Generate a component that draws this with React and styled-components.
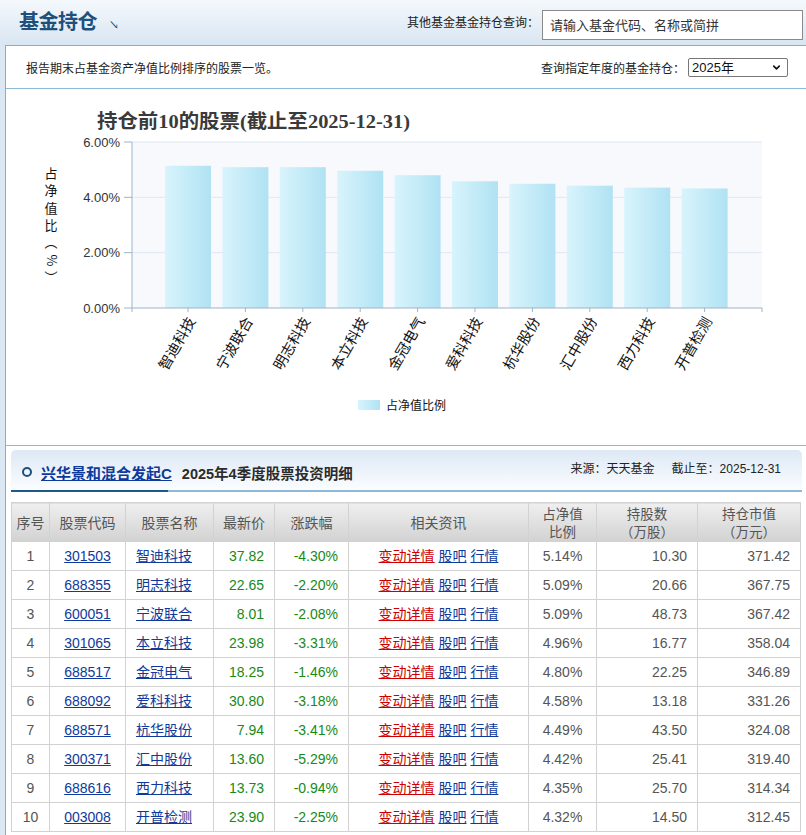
import React from "react";
import styled, { createGlobalStyle } from "styled-components";
import { ChevronDown } from "lucide-react";

const GlobalStyle = createGlobalStyle`
  html, body {
    margin: 0;
    padding: 0;
  }
  body {
    background: #dbe7f3;
    font-family: "Liberation Sans", Arial, "Noto Sans CJK SC", sans-serif;
    color: #333;
    overflow: hidden;
  }
`;

const chartData = [
  { name: "智迪科技", value: 5.14 },
  { name: "宁波联合", value: 5.09 },
  { name: "明志科技", value: 5.09 },
  { name: "本立科技", value: 4.96 },
  { name: "金冠电气", value: 4.8 },
  { name: "爱科科技", value: 4.58 },
  { name: "杭华股份", value: 4.49 },
  { name: "汇中股份", value: 4.42 },
  { name: "西力科技", value: 4.35 },
  { name: "开普检测", value: 4.32 },
];

const rows = [
  ["1", "301503", "智迪科技", "37.82", "-4.30%", "5.14%", "10.30", "371.42"],
  ["2", "688355", "明志科技", "22.65", "-2.20%", "5.09%", "20.66", "367.75"],
  ["3", "600051", "宁波联合", "8.01", "-2.08%", "5.09%", "48.73", "367.42"],
  ["4", "301065", "本立科技", "23.98", "-3.31%", "4.96%", "16.77", "358.04"],
  ["5", "688517", "金冠电气", "18.25", "-1.46%", "4.80%", "22.25", "346.89"],
  ["6", "688092", "爱科科技", "30.80", "-3.18%", "4.58%", "13.18", "331.26"],
  ["7", "688571", "杭华股份", "7.94", "-3.41%", "4.49%", "43.50", "324.08"],
  ["8", "300371", "汇中股份", "13.60", "-5.29%", "4.42%", "25.41", "319.40"],
  ["9", "688616", "西力科技", "13.73", "-0.94%", "4.35%", "25.70", "314.34"],
  ["10", "003008", "开普检测", "23.90", "-2.25%", "4.32%", "14.50", "312.45"],
];

const colWidths = [38, 76, 88, 61, 74, 180, 68, 101, 103];

function HoldingChart() {
  const X0 = 132;
  const X1 = 762;
  const Y0 = 142;
  const Y1 = 308;
  const yOf = (v) => Y1 - (v / 6) * (Y1 - Y0);
  const cx = (i) => 188 + 57.4 * i;
  const yTicks = [0, 2, 4, 6];
  const yTitle = ["占", "净", "值", "比", "︵", "%", "︶"];

  return (
    <svg width="801" height="356" style={{ display: "block" }}>
      <defs>
        <linearGradient id="barFill" x1="0" y1="0" x2="1" y2="0">
          <stop offset="0" stopColor="#d8f4fc" />
          <stop offset="1" stopColor="#b0e2f3" />
        </linearGradient>
      </defs>
      <g transform="translate(-6,-89)">
        <text
          x="97"
          y="128"
          fontSize="19"
          fontWeight="bold"
          fill="#3a3a3a"
          fontFamily='"Liberation Serif", "Noto Sans CJK SC", serif'
          textLength="313"
          lengthAdjust="spacingAndGlyphs"
        >
          持仓前10的股票(截止至2025-12-31)
        </text>

        {yTitle.map((ch, i) => (
          <text
            key={i}
            x="51"
            y={178 + i * 17.3}
            fontSize="13"
            textAnchor="middle"
            fill="#111"
            fontFamily='"Noto Sans CJK SC", sans-serif'
            transform={ch === "%" ? `rotate(90 51 ${174 + i * 17.3})` : undefined}
          >
            {ch}
          </text>
        ))}

        <rect x={X0} y={Y0} width={X1 - X0} height={Y1 - Y0} fill="#f7f9fc" />
        {yTicks.map((t) => (
          <g key={t}>
            {t > 0 && (
              <line x1={X0} x2={X1} y1={yOf(t)} y2={yOf(t)} stroke="#e0e8f1" strokeWidth="1" />
            )}
            <line x1={X0 - 8} x2={X0} y1={yOf(t)} y2={yOf(t)} stroke="#9db4c9" />
            <text
              x="120"
              y={yOf(t) + 4.5}
              fontSize="13"
              textAnchor="end"
              fill="#333"
              fontFamily='"Liberation Sans", Arial, sans-serif'
            >
              {t.toFixed(2)}%
            </text>
          </g>
        ))}

        {chartData.map((d, i) => (
          <rect
            key={d.name}
            x={cx(i) - 23}
            y={yOf(d.value)}
            width="46"
            height={Y1 - yOf(d.value)}
            fill="url(#barFill)"
          />
        ))}

        <line x1={X0} x2={X0} y1={Y0} y2={Y1} stroke="#9db4c9" />
        <line x1={X0} x2={X1} y1={Y1} y2={Y1} stroke="#9db4c9" />
        <line x1={X0} x2={X0} y1={Y1} y2={Y1 + 4} stroke="#9db4c9" />
        <line x1={X1} x2={X1} y1={Y1} y2={Y1 + 4} stroke="#9db4c9" />
        {chartData.map((d, i) => (
          <g key={d.name}>
            <line x1={cx(i)} x2={cx(i)} y1={Y1} y2={Y1 + 4} stroke="#9db4c9" />
            <text
              x={cx(i) + 8}
              y="321"
              fontSize="14.5"
              textAnchor="end"
              fill="#111"
              fontFamily='"Noto Sans CJK SC", sans-serif'
              transform={`rotate(-60 ${cx(i) + 8} 321)`}
            >
              {d.name}
            </text>
          </g>
        ))}

        <rect x="358" y="400" width="22" height="10" fill="url(#barFill)" />
        <text
          x="386"
          y="410"
          fontSize="12"
          fill="#111"
          fontFamily='"Noto Sans CJK SC", sans-serif'
        >
          占净值比例
        </text>
      </g>
    </svg>
  );
}

export default function App() {
  return (
    <Page>
      <GlobalStyle />
      <TopBar>
        <Title>
          基金持仓<Corner>↘</Corner>
        </Title>
        <Search>
          <Label>其他基金基金持仓查询：</Label>
          <SearchInput placeholder="请输入基金代码、名称或简拼" />
        </Search>
      </TopBar>

      <Panel>
        <IntroRow>
          <Small>报告期末占基金资产净值比例排序的股票一览。</Small>
          <Search>
            <Small>查询指定年度的基金持仓：</Small>
            <SelectWrap>
              <Select defaultValue="2025">
                <option value="2025">2025年</option>
                <option value="2024">2024年</option>
              </Select>
              <ChevronDown size={11} strokeWidth={3.5} />
            </SelectWrap>
          </Search>
        </IntroRow>

        <ChartBox>
          <HoldingChart />
        </ChartBox>

        <Section>
          <SectionHead>
            <HeadLeft>
              <Ring />
              <FundLink href="#">兴华景和混合发起C</FundLink>
              <HeadTitle>2025年4季度股票投资明细</HeadTitle>
            </HeadLeft>
            <HeadRight>
              <span>来源：天天基金</span>
              <span>截止至：2025-12-31</span>
            </HeadRight>
          </SectionHead>
          <Rule />

          <Table>
            <colgroup>
              {colWidths.map((w, i) => (
                <col key={i} style={{ width: w }} />
              ))}
            </colgroup>
            <thead>
              <tr>
                <Th>序号</Th>
                <Th>股票代码</Th>
                <Th>股票名称</Th>
                <Th>最新价</Th>
                <Th>涨跌幅</Th>
                <Th>相关资讯</Th>
                <Th>
                  <ThLine>占净值</ThLine>
                  <ThLine>比例</ThLine>
                </Th>
                <Th>
                  <ThLine>持股数</ThLine>
                  <ThLine>（万股）</ThLine>
                </Th>
                <Th>
                  <ThLine>持仓市值</ThLine>
                  <ThLine>（万元）</ThLine>
                </Th>
              </tr>
            </thead>
            <tbody>
              {rows.map((r) => (
                <tr key={r[0]}>
                  <Td $align="center">{r[0]}</Td>
                  <Td $align="center">
                    <Link href="#">{r[1]}</Link>
                  </Td>
                  <Td $align="left">
                    <Link href="#">{r[2]}</Link>
                  </Td>
                  <Td $align="right" $tone="up">
                    {r[3]}
                  </Td>
                  <Td $align="right" $tone="up">
                    {r[4]}
                  </Td>
                  <Td $align="center">
                    <Link href="#" $red>
                      变动详情
                    </Link>{" "}
                    <Link href="#">股吧</Link> <Link href="#">行情</Link>
                  </Td>
                  <Td $align="center">{r[5]}</Td>
                  <Td $align="right">{r[6]}</Td>
                  <Td $align="right">{r[7]}</Td>
                </tr>
              ))}
            </tbody>
          </Table>
        </Section>
      </Panel>
    </Page>
  );
}

const Page = styled.div`
  width: 806px;
  height: 835px;
  overflow: hidden;
`;

const TopBar = styled.div`
  height: 45px;
  display: flex;
  align-items: center;
  justify-content: space-between;
  padding: 0 3px 0 19px;
  background: linear-gradient(#f4f8fc, #d9e6f2);
`;

const Title = styled.h1`
  margin: 0;
  font-size: 20px;
  line-height: 24px;
  font-weight: bold;
  color: #1f4f7b;
  font-family: "Noto Sans CJK SC", sans-serif;
  letter-spacing: -0.5px;
`;

const Corner = styled.span`
  margin-left: 12px;
  font-size: 10px;
  color: #1f4f7b;
  font-weight: normal;
`;

const Search = styled.div`
  display: flex;
  align-items: center;
`;

const Label = styled.span`
  font-size: 12px;
  color: #222;
  margin-right: 3px;
  margin-top: -2px;
`;

const SearchInput = styled.input`
  box-sizing: border-box;
  width: 261px;
  height: 30px;
  margin-top: 4px;
  border: 1px solid #8a8a8a;
  padding: 0 7px;
  font-size: 13px;
  font-family: "Noto Sans CJK SC", sans-serif;
  background: #fff;
  outline: none;
  &::placeholder {
    color: #333;
  }
`;

const Panel = styled.div`
  margin-left: 5px;
  width: 801px;
  border: 1px solid #7fb1cf;
  background: #fff;
  padding-bottom: 20px;
`;

const IntroRow = styled.div`
  height: 42px;
  display: flex;
  align-items: center;
  justify-content: space-between;
  padding: 0 19px 0 20px;
  border-bottom: 1px solid #8dbad7;
`;

const Small = styled.span`
  font-size: 12px;
  color: #222;
`;

const SelectWrap = styled.div`
  position: relative;
  margin-left: 3px;
  svg {
    position: absolute;
    right: 6px;
    top: 4px;
    pointer-events: none;
    color: #111;
  }
`;

const Select = styled.select`
  appearance: none;
  box-sizing: border-box;
  width: 100px;
  height: 19px;
  padding: 0 0 0 3px;
  border: 1px solid #777;
  border-radius: 2px;
  background: #fff;
  font-size: 13px;
  font-family: "Liberation Sans", "Noto Sans CJK SC", sans-serif;
  color: #111;
  line-height: 17px;
`;

const ChartBox = styled.div`
  height: 356px;
  border-bottom: 1px solid #8dbad7;
`;

const Section = styled.div`
  margin: 4px 0 0 5px;
  width: 791px;
`;

const SectionHead = styled.div`
  height: 40px;
  display: flex;
  align-items: center;
  justify-content: space-between;
  padding: 0 21px 0 11px;
  border-radius: 5px 5px 0 0;
  background: linear-gradient(#dde8f5, #fbfdff);
`;

const HeadLeft = styled.div`
  display: flex;
  align-items: center;
  margin-top: 4px;
`;

const Ring = styled.span`
  box-sizing: border-box;
  width: 10px;
  height: 10px;
  border: 2px solid #1f4f7b;
  border-radius: 50%;
  margin-right: 9px;
`;

const FundLink = styled.a`
  font-size: 15px;
  font-weight: bold;
  color: #0f3a9b;
  text-decoration: underline;
  margin-right: 10px;
  font-family: "Liberation Sans", "Noto Sans CJK SC", sans-serif;
`;

const HeadTitle = styled.span`
  font-size: 14.5px;
  font-weight: bold;
  color: #2b2b2b;
`;

const HeadRight = styled.div`
  display: flex;
  gap: 17px;
  font-size: 12px;
  color: #222;
  margin-top: -6px;
`;

const Rule = styled.div`
  height: 2px;
  background: linear-gradient(to right, #1d5a8a 157px, #8fb8d8 157px);
`;

const Table = styled.table`
  margin-top: 10px;
  width: 789px;
  border-collapse: collapse;
  table-layout: fixed;
  font-size: 14px;
`;

const Th = styled.th`
  height: 38px;
  padding: 0;
  border: 1px solid #d2d2d2;
  background: linear-gradient(#efefef, #d2d2d2);
  color: #555;
  font-weight: normal;
  font-size: 14px;
  line-height: 18px;
  font-family: "Noto Sans CJK SC", sans-serif;
`;

const ThLine = styled.div`
  font-size: 13.5px;
  height: 18px;
  line-height: 18px;
`;

const Td = styled.td`
  height: 28px;
  padding: 0 10px;
  border: 1px solid #d2d2d2;
  text-align: ${(p) => p.$align};
  color: ${(p) => (p.$tone === "up" ? "#178a17" : "#555")};
  white-space: nowrap;
  line-height: 16px;
`;

const Link = styled.a`
  color: ${(p) => (p.$red ? "#cc0000" : "#0f3a9b")};
  text-decoration: underline;
`;
